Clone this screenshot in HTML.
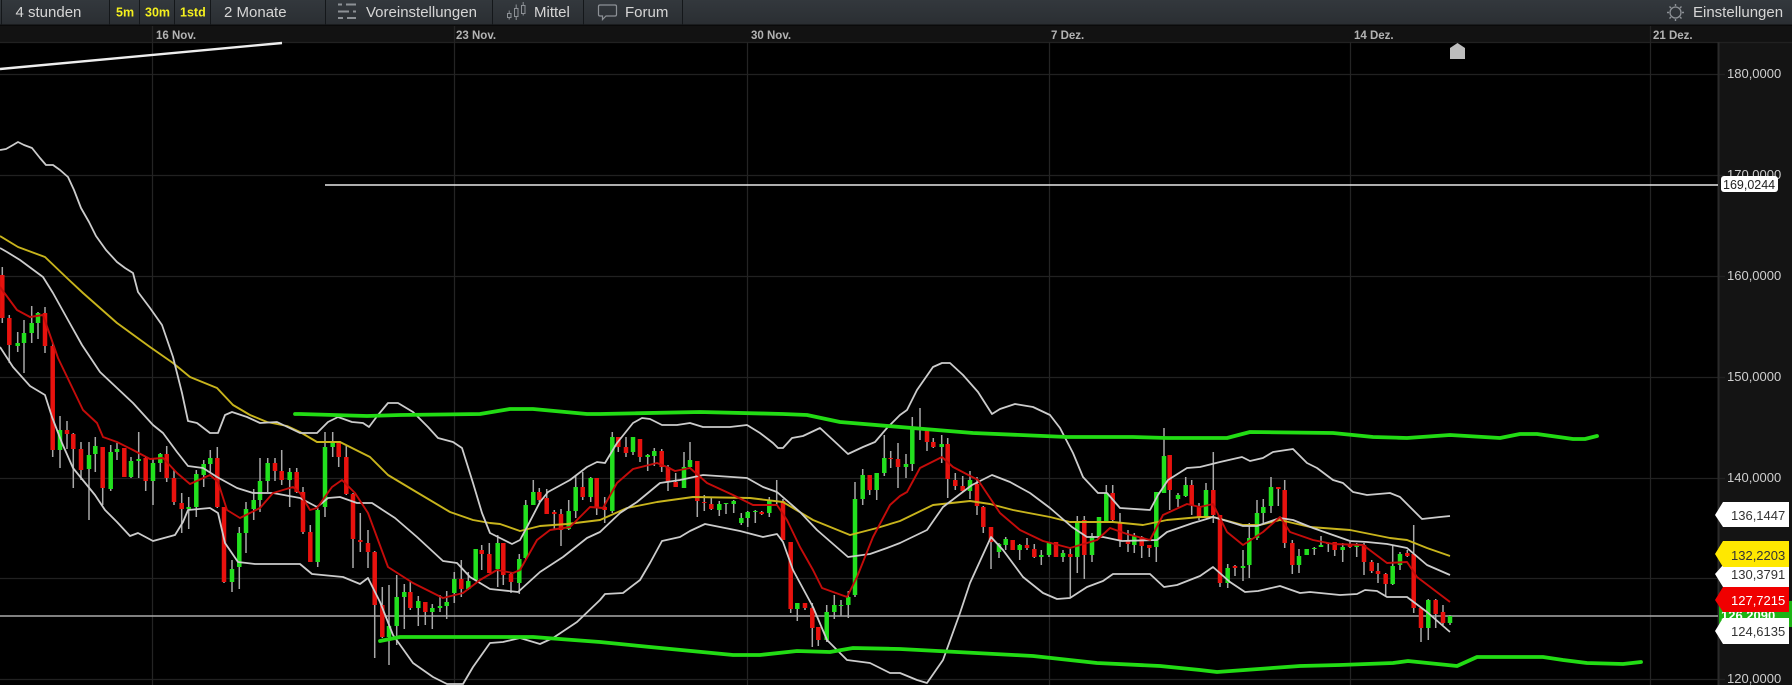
<!DOCTYPE html>
<html><head><meta charset="utf-8"><title>Chart</title>
<style>
html,body{margin:0;padding:0;background:#000;width:1792px;height:685px;overflow:hidden}
svg{display:block;filter:blur(.35px)}
text{font-family:"Liberation Sans",Arial,sans-serif}
</style></head><body>
<svg width="1792" height="685" viewBox="0 0 1792 685" xmlns="http://www.w3.org/2000/svg">
<defs><linearGradient id="h" x1="0" y1="0" x2="0" y2="1"><stop offset="0" stop-color="#33383d"/><stop offset="1" stop-color="#2a2e32"/></linearGradient></defs>
<rect width="1792" height="685" fill="#000"/>
<rect x="0" y="25" width="1792" height="17" fill="#121212"/>
<rect x="1718" y="42" width="74" height="643" fill="#141414"/>
<!-- grid -->
<path d="M0 42.5H1792M0 74.5H1725M0 175.5H1725M0 276.5H1725M0 377.5H1725M0 478.5H1725M0 578.5H1725M0 679.5H1725" stroke="#212121" stroke-width="1.2" fill="none"/>
<path d="M152.5 25V685M454.5 25V685M747.5 42V685M1049.5 42V685M1350.5 42V685M1650.5 25V685" stroke="#242424" stroke-width="1.2" fill="none"/>
<path d="M1718.5 42V685" stroke="#2a2a2a" stroke-width="2" fill="none"/>
<!-- date labels -->
<g font-size="11.5" fill="#cfcfcf" font-weight="700" opacity=".85">
<text x="156" y="39">16 Nov.</text><text x="456" y="39">23 Nov.</text><text x="751" y="39">30 Nov.</text><text x="1051" y="39">7 Dez.</text><text x="1354" y="39">14 Dez.</text><text x="1653" y="39">21 Dez.</text>
</g>
<!-- marker -->
<path d="M1450 48L1457.500 43L1465 48V59H1450Z" fill="#bdbdbd"/>
<!-- static lines -->
<path d="M0 69L282 43" stroke="#eee" stroke-width="2.4" fill="none"/>
<path d="M325 185H1718" stroke="#e8e8e8" stroke-width="1.5" fill="none"/>
<path d="M0 616H1718" stroke="#aaa" stroke-width="1.5" fill="none"/>
<!-- wicks -->
<path stroke="#a8a8a8" stroke-width="1.5" fill="none" d="M2.300 267V323M9.300 315V363M17.700 332V352M24 320V373M31.700 306V343M38 312V339M45 307V353M52.700 343V457M60 416V468M67 421V449M73.300 433V488M81 442V480M89 442V520M95.300 437V472M102.700 447V505M110.700 445V491M117 443V460M124.300 448V477M131 457V478M138.700 432V478M145.700 457V491M153 458V505M160.300 453V472M166.700 446V482M174 470V505M181.700 493V533M188.700 497V529M196.300 470V517M203.700 460V487M210.300 450V473M217.300 447V508M224 507V583M232 560V592M239.300 527V589M246 502V553M253.700 489V520M260 458V512M267.700 458V492M275 458V481M281.700 450V485M289.700 468V507M296.700 468V493M303 487V534M310.300 525V562M317.700 508V567M325 432V517M332.700 432V457M338.700 441V467M346.300 445V495M353 493V568M360.300 513V552M368 530V568M374.700 551V658M382.300 587V638M389 585V665M396.700 575V645M404.300 584V629M410.300 581V610M418.300 596V626M425.300 602V625M432.300 604V629M440 595V612M446.700 591V619M454.300 572V603M461.300 560V597M468.300 572V590M475.700 549V580M481.700 545V570M489.300 543V573M497.700 535V587M503.300 543V585M511 572V593M519.300 554V594M525.700 500V560M533.300 480V505M539.300 488V502M546.700 489V514M554.300 510V530M561 509V546M568.700 500V530M575.700 475V518M582.700 472V500M590.700 477V502M596.700 478V515M604.700 497V523M612.300 432V513M618.300 437V452M626 437V457M633 437V455M640 439V462M647.700 454V471M654.300 448V466M661.700 449V472M668 465V491M675.700 473V487M684 452V488M690 442V468M697.300 461V517M704.300 495V511M711.300 498V510M719.300 501V516M726 503V514M733.700 500V513M741.300 513V525M747.700 511V527M755.300 510V523M761.700 511V515M769.300 497V517M776.700 480V506M783 499V540M790.700 542V613M797.300 603V621M805 603V610M812.300 603V647M818.300 627V646M826.700 605V642M834.300 595V619M841 600V616M848.300 591V618M855 482V597M862.700 469V505M869.700 475V495M876.700 473V500M884.300 435V476M890.700 451V468M898 443V488M906 454V478M912.300 417V471M920 408V440M927 431V451M933.300 438V448M941.700 435V463M947.700 438V498M955.300 473V490M962.700 476V492M970 471V499M977 477V515M983.300 506V533M991 527V569M999 543V558M1005.700 537V550M1012.700 540V550M1019.700 544V560M1027 538V550M1034.300 544V558M1041.300 550V565M1049 542V557M1056 542V557M1063 550V562M1070.300 548V598M1077.300 516V573M1084.300 516V579M1092 533V562M1099 517V537M1106.300 485V522M1112.700 485V522M1120 513V547M1128 530V552M1134.300 533V553M1141.700 536V558M1149.300 545V557M1156.300 492V562M1164 428V493M1169.700 455V510M1178 493V507M1185.700 477V497M1191.700 480V515M1199 503V520M1206 483V518M1213.300 452V523M1220 515V587M1227.700 564V588M1235 565V576M1243 550V581M1249.300 523V578M1257 500V540M1263.300 499V523M1271 477V513M1278.300 487V506M1284.700 480V548M1292.300 540V574M1299 549V573M1306.700 549V555M1314.300 547V555M1321 536V547M1328.300 543V552M1334.700 542V556M1342.700 543V562M1350 542V548M1356.700 543V557M1364 543V575M1371.700 560V573M1378 563V583M1385.700 573V597M1392.700 545V585M1400 552V570M1407.300 550V557M1413.700 525V613M1421 608V642M1428.300 599V640M1435.700 599V628M1443 605V625M1450 615V625"/>
<!-- green bodies -->
<path stroke="#22e01e" stroke-width="4.5" fill="none" d="M17.700 343V346M24 333V343M31.700 323V333M38 313V323M60 430V450M89 455V469M95.300 446V454M110.700 452V489M117 449V452M131 461V477M138.700 459V461M153 463V481M160.300 454V463M188.700 507V509M196.300 474V507M203.700 464V475M210.300 458V464M232 569V582M239.300 533V567M246 509V533M253.700 500V509M260 481V500M267.700 463V481M289.700 472V480M317.700 510V562M325 447V507M332.700 441V447M389 626V637M396.700 597V626M404.300 592V597M418.300 601V608M432.300 608V612M440 606V608M446.700 602V606M454.300 579V593M468.300 581V589M475.700 549V580M497.700 543V569M519.300 559V583M525.700 505V558M533.300 492V505M568.700 511V529M575.700 487V511M590.700 478V497M612.300 437V511M633 437V452M647.700 455V457M654.300 451V456M684 467V488M690 460V467M719.300 504V510M726 503V504M733.700 501V504M741.300 518V523M747.700 512V518M755.300 511V512M769.300 501V513M797.300 603V609M826.700 612V640M834.300 605V612M841 605V606M848.300 597V605M855 499V595M862.700 475V499M876.700 473V490M884.300 458V473M906 464V467M912.300 429V464M941.700 444V447M970 480V491M999 544V552M1005.700 539V545M1019.700 545V550M1041.300 555V557M1049 542V555M1063 553V557M1077.300 522V557M1092 536V555M1099 517V536M1106.300 493V521M1134.300 536V545M1156.300 492V547M1164 456V493M1178 495V499M1185.700 485V496M1206 490V517M1227.700 568V583M1243 566V568M1249.300 538V565M1257 513V538M1263.300 507V513M1271 487V506M1299 556V565M1306.700 549V555M1314.300 548V549M1321 545V547M1342.700 547V550M1356.700 545V547M1392.700 566V584M1400 554V565M1428.300 600V628M1450 616V623"/>
<!-- red bodies -->
<path stroke="#e8120e" stroke-width="4.5" fill="none" d="M2.300 275V318M9.300 318V345M45 313V346M52.700 346V450M67 430V434M73.300 434V449M81 449V470M102.700 447V488M124.300 448V477M145.700 458V481M166.700 454V478M174 478V502M181.700 503V509M217.300 458V507M224 507V582M275 463V471M281.700 471V480M296.700 472V492M303 492V532M310.300 532V562M338.700 441V457M346.300 457V494M353 494V539M360.300 540V542M368 543V552M374.700 552V605M382.300 605V637M410.300 592V608M425.300 602V612M461.300 579V589M481.700 550V554M489.300 554V573M503.300 543V575M511 574V582M539.300 492V500M546.700 498V514M554.300 512V514M561 514V530M582.700 487V497M596.700 478V507M604.700 507V510M618.300 437V447M626 447V453M640 439V457M661.700 451V467M668 467V482M675.700 482V487M697.300 461V501M704.300 502V503M711.300 504V509M761.700 512V514M783 501V540M790.700 542V609M805 603V608M812.300 608V628M818.300 627V640M869.700 475V490M890.700 458V459M898 459V467M927 431V442M933.300 442V447M947.700 444V479M955.300 480V486M962.700 486V491M977 484V506M983.300 507V527M991 527V542M1012.700 540V550M1027 545V548M1034.300 549V557M1056 542V557M1070.300 554V557M1084.300 520V555M1112.700 493V520M1120 522V540M1128 540V544M1141.700 537V546M1149.300 545V548M1169.700 455V490M1191.700 485V505M1199 506V517M1213.300 490V515M1220 515V583M1235 566V568M1278.300 487V489M1284.700 490V543M1292.300 543V565M1328.300 543V544M1334.700 542V550M1350 545V547M1364 545V562M1371.700 562V571M1378 571V574M1385.700 574V584M1407.300 553V556M1413.700 554V608M1421 608V628M1435.700 600V614M1443 612V623"/>
<!-- yellow -->
<polyline fill="none" stroke="#c8b41c" stroke-width="1.9" stroke-linejoin="round" points="0,236 18,247 45,257 68,279 83,293 117,323 150,347 173,363 190,377 217,388 233,405 250,415 267,422 287,426 300,432 317,442 340,442 370,457 388,475 413,490 450,512 473,520 490,523 500,524 520,531 540,526 567,524 600,520 627,508 657,502 693,497 750,498 783,502 813,520 850,535 877,528 900,521 933,505 970,501 990,504 1013,510 1050,517 1070,522 1113,522 1143,525 1167,520 1200,517 1213,517 1243,525 1260,525 1280,520 1310,527 1350,530 1390,538 1407,540 1427,548 1450,556"/>
<!-- upper band -->
<polyline fill="none" stroke="#cccccc" stroke-width="1.800" stroke-linejoin="round" points="0,150 6,149 13,145 18,142 24,145 32,148 40,158 46,165 53,165 60,170 68,177 74,190 81,208 89,222 96,236 106,250 117,262 125,268 133,273 138,292 150,308 162,325 173,357 182,393 188,421 197,423 210,433 218,433 225,415 232,412 247,417 260,423 277,422 300,433 317,433 328,422 338,417 352,422 363,423 369,427 378,415 388,403 398,403 413,412 428,427 438,438 453,442 462,448 473,483 482,513 490,533 498,537 512,544 520,540 527,527 540,502 548,492 570,480 587,467 597,462 605,463 617,443 633,423 642,418 650,419 662,425 677,425 690,423 703,427 730,427 747,425 760,433 773,443 778,448 783,448 792,438 803,436 820,428 833,440 848,454 863,447 875,442 887,428 900,415 907,410 917,390 933,367 942,363 950,363 963,375 978,392 992,414 1000,409 1015,404 1033,407 1050,415 1060,428 1073,453 1083,477 1098,493 1107,493 1120,508 1150,510 1158,495 1168,480 1187,468 1200,467 1220,462 1242,457 1250,461 1263,458 1273,452 1293,449 1307,463 1317,468 1333,480 1343,483 1353,492 1367,495 1390,493 1400,497 1410,507 1422,519 1440,517 1450,516"/>
<!-- middle band -->
<polyline fill="none" stroke="#cccccc" stroke-width="1.800" stroke-linejoin="round" points="0,248 7,252 20,260 43,277 53,293 68,320 82,345 100,372 117,388 133,403 153,425 163,433 177,452 188,466 203,468 217,477 237,488 253,493 273,493 300,498 317,507 328,498 340,497 357,503 372,503 395,518 417,537 443,561 457,563 470,577 490,589 518,592 540,572 563,557 587,538 600,532 620,513 637,502 660,483 680,480 703,475 747,478 763,487 777,492 800,512 817,530 848,557 870,554 887,548 900,543 927,530 943,507 972,485 992,475 1010,482 1030,493 1050,508 1072,527 1087,537 1103,537 1122,541 1157,540 1167,532 1193,523 1200,521 1213,517 1227,521 1243,526 1257,526 1280,518 1293,520 1313,528 1350,541 1367,542 1387,544 1407,548 1427,565 1450,575"/>
<!-- lower band -->
<polyline fill="none" stroke="#cccccc" stroke-width="1.800" stroke-linejoin="round" points="0,347 13,367 30,386 45,395 52,417 62,443 73,468 95,495 105,510 117,522 130,536 138,533 153,541 175,535 183,522 188,510 210,508 218,513 225,543 238,562 255,564 300,564 312,574 343,577 360,584 368,578 380,602 393,635 413,663 433,677 447,684 463,684 473,667 490,643 503,642 520,638 540,644 553,638 577,622 600,600 605,594 623,593 640,580 650,563 662,541 680,537 690,531 705,524 740,531 763,537 777,534 783,542 793,570 813,607 827,640 847,660 870,663 890,673 900,673 917,680 927,683 943,660 960,613 970,583 991,537 1003,550 1023,577 1043,593 1057,599 1070,598 1087,587 1103,581 1113,574 1150,574 1164,587 1177,585 1200,576 1213,567 1230,582 1245,592 1258,591 1280,586 1300,593 1310,592 1340,595 1357,594 1365,590 1377,591 1387,597 1407,597 1427,612 1450,632"/>
<!-- red MA -->
<polyline fill="none" stroke="#c40c0a" stroke-width="1.900" stroke-linejoin="round" points="0,287 17,310 30,317 43,315 58,358 83,410 97,423 103,437 117,442 133,450 150,459 163,458 177,473 190,484 210,475 218,482 227,510 240,518 260,508 273,493 293,487 300,493 310,510 317,508 332,487 342,480 355,493 368,513 388,567 413,583 443,598 463,593 480,580 497,570 513,573 520,570 537,540 550,530 570,527 590,507 603,508 617,483 633,469 657,463 667,467 675,471 690,468 707,483 733,495 753,505 777,505 787,520 800,547 813,570 822,588 847,597 857,577 873,537 890,505 900,496 907,492 920,468 942,457 953,467 978,480 1000,513 1020,530 1043,541 1070,548 1097,540 1110,528 1127,534 1150,540 1163,515 1187,504 1200,507 1213,504 1227,532 1243,545 1263,532 1280,517 1290,532 1313,540 1333,544 1363,545 1387,563 1407,562 1417,577 1450,602"/>
<!-- thick green channel -->
<polyline fill="none" stroke="#22dc14" stroke-width="3.800" stroke-linecap="round" stroke-linejoin="round" points="295,414 300,414 367,416 400,415 480,414 510,409 533,409 587,414 600,414 700,412 783,414 807,415 840,422 900,427 973,433 1067,437 1133,437 1167,438 1227,438 1250,432 1333,433 1373,437 1407,438 1450,435 1500,438 1520,434 1537,434 1573,439 1585,439 1597,436"/>
<polyline fill="none" stroke="#22dc14" stroke-width="3.800" stroke-linecap="round" stroke-linejoin="round" points="380,641 400,637 413,637 477,637 533,637 600,642 650,647 733,655 760,655 797,651 830,652 853,648 900,649 1033,656 1097,663 1160,666 1200,670 1217,672 1300,666 1340,665 1393,663 1408,661 1457,666 1477,657 1500,657 1543,657 1563,660 1587,663 1623,664 1641,662"/>
<!-- axis labels -->
<g font-size="13" fill="#cfcfcf">
<text x="1727" y="78">180,0000</text><text x="1727" y="179">170,0000</text><text x="1727" y="280">160,0000</text><text x="1727" y="381">150,0000</text><text x="1727" y="482">140,0000</text><text x="1727" y="683">120,0000</text>
</g>
<rect x="1721" y="176" width="57" height="16" rx="3" fill="#fff"/>
<text x="1723" y="189" font-size="12.500" fill="#222">169,0244</text>
<!-- price tags -->
<path d="M1719 601H1792V627H1719Z" fill="#1db214"/>
<text x="1721" y="620" font-size="13" font-weight="700" fill="#fff">126,2090</text>
<path d="M1715 515L1723 502H1789V527H1723Z" fill="#fff"/>
<text x="1731" y="520" font-size="13" fill="#333">136,1447</text>
<path d="M1715 574L1723 565H1789V587H1723Z" fill="#fff"/>
<text x="1731" y="579" font-size="13" fill="#333">130,3791</text>
<path d="M1715 554L1723 541H1789V567H1723Z" fill="#ffe800"/>
<text x="1731" y="560" font-size="13" fill="#333">132,2203</text>
<path d="M1715 600L1723 587H1789V612H1723Z" fill="#f00000"/>
<text x="1731" y="605" font-size="13" fill="#fff">127,7215</text>
<path d="M1715 631L1723 618H1789V644H1723Z" fill="#fff"/>
<text x="1731" y="636" font-size="13" fill="#333">124,6135</text>
<!-- header -->
<rect x="0" y="0" width="1792" height="25" fill="url(#h)"/>
<rect x="0" y="24.500" width="1792" height="1.500" fill="#0a0a0a"/>
<path d="M1.500 0V25M109.500 0V25M139.500 0V25M174.500 0V25M210.500 0V25M325.500 0V25M492.500 0V25M583.500 0V25M682.500 0V25" stroke="#14171a" stroke-width="1" fill="none"/>
<g font-size="15" fill="#d6d6d6">
<text x="15.500" y="17">4 stunden</text>
<text x="224" y="17">2 Monate</text>
<text x="366" y="17">Voreinstellungen</text>
<text x="534" y="17">Mittel</text>
<text x="625" y="17">Forum</text>
<text x="1693" y="17">Einstellungen</text>
</g>
<g font-size="12.500" font-weight="700" fill="#f5f01e">
<text x="116" y="16.500">5m</text><text x="145" y="16.500">30m</text><text x="180" y="16.500">1std</text>
</g>
<!-- sliders icon -->
<path d="M338 4.500H342M346 4.500H356M338 11.500H349M353 11.500H356M338 18H343M347 18H356" stroke="#8d9196" stroke-width="2" fill="none"/>
<!-- candles icon -->
<g stroke="#8d9196" stroke-width="1" fill="none">
<rect x="507.500" y="13.500" width="3.500" height="4"/><path d="M509.200 10.500V13.500M509.200 17.500V19.500"/>
<rect x="514.500" y="8.500" width="3.500" height="8"/><path d="M516.200 4.500V8.500M516.200 16.500V20"/>
<rect x="521.500" y="5.500" width="3.500" height="8"/><path d="M523.200 2V5.500M523.200 13.500V15.500"/>
</g>
<!-- forum icon -->
<path d="M600 5H615Q616.500 5 616.500 6.500V14.500Q616.500 16 615 16H606L602.500 19.500V16H600Q598.500 16 598.500 14.500V6.500Q598.500 5 600 5Z" fill="none" stroke="#8d9196" stroke-width="1.200"/>
<!-- gear icon -->
<g stroke="#8d9196" fill="none">
<circle cx="1675.500" cy="12.500" r="5.500" stroke-width="1.300"/>
<path d="M1675.500 4V6M1675.500 19V21M1667 12.500H1669M1682 12.500H1684M1669.500 6.500L1671 8M1680 17L1681.500 18.500M1681.500 6.500L1680 8M1671 17L1669.500 18.500" stroke-width="1.400"/>
</g>
</svg>
</body></html>
